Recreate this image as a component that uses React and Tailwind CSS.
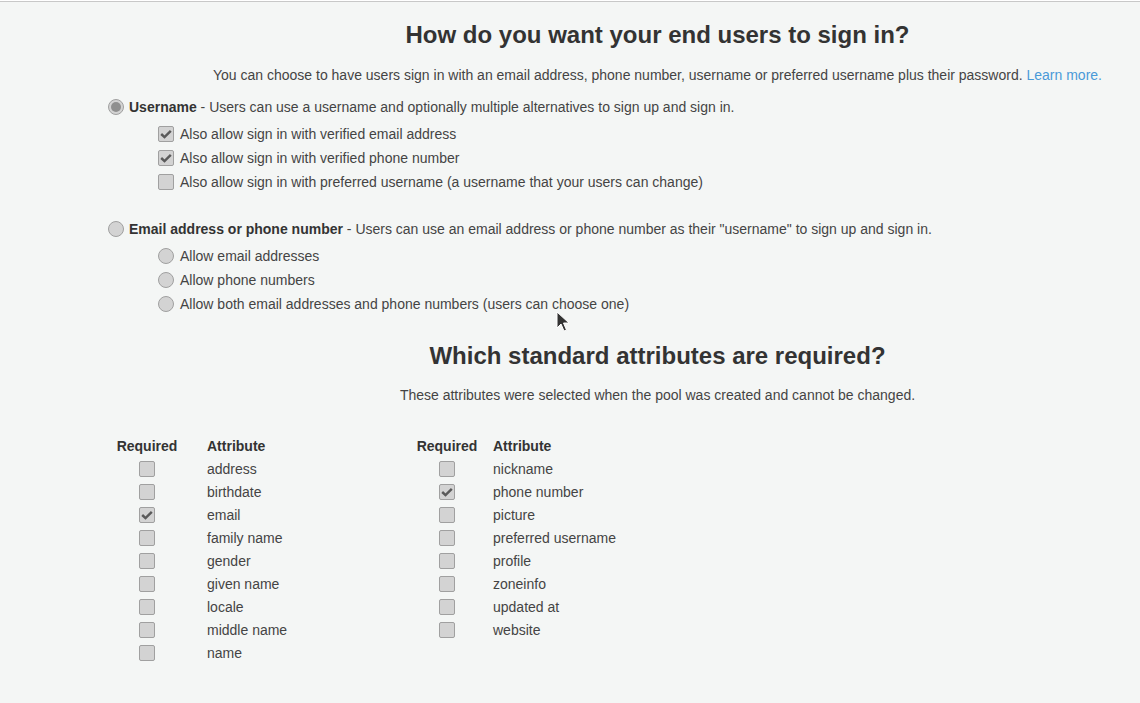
import React from "react";

const font = { fontFamily: '"Liberation Sans", Arial, sans-serif' };

function Check({ checked }) {
  return (
    <span className="inline-flex items-center justify-center w-4 h-4 rounded-[2px] border border-[#a0a0a0] bg-[#d3d3d3] shrink-0">
      {checked && (
        <svg viewBox="0 0 16 16" className="w-[14px] h-[14px]">
          <path d="M2.5 8 L6.3 11.5 L13.5 4.5" fill="none" stroke="#5a5a5a" strokeWidth="2.8" />
        </svg>
      )}
    </span>
  );
}

function Radio({ checked }) {
  return (
    <span className="inline-flex items-center justify-center w-4 h-4 rounded-full border border-[#a0a0a0] bg-[#d3d3d3] shrink-0">
      {checked && <span className="w-[10px] h-[10px] rounded-full bg-[#8f8f8f]" />}
    </span>
  );
}

const left = ["address", "birthdate", "email", "family name", "gender", "given name", "locale", "middle name", "name"];
const right = ["nickname", "phone number", "picture", "preferred username", "profile", "zoneinfo", "updated at", "website"];

function AttrTable({ rows, checked, cols }) {
  return (
    <div className={`grid ${cols} grid-rows-[22px] auto-rows-[23px] items-center text-sm text-[#444]`}>
      <div className="text-center font-bold text-[#333]">Required</div>
      <div className="font-bold text-[#333]">Attribute</div>
      {rows.map(r => (
        <React.Fragment key={r}>
          <div className="flex justify-center"><Check checked={checked.includes(r)} /></div>
          <div>{r}</div>
        </React.Fragment>
      ))}
    </div>
  );
}

export default function App() {
  return (
    <div style={font} className="relative w-[1140px] h-[703px] bg-[#f4f6f5] border-t border-[#c8c8c8] mt-px text-[#444] overflow-hidden">
      <div className="pl-[175px] text-center">
        <h1 className="text-[24px] font-bold text-[#333] mt-[18px] leading-[30px]">How do you want your end users to sign in?</h1>
        <p className="text-sm mt-[15px] leading-5">
          You can choose to have users sign in with an email address, phone number, username or preferred username plus their password.{" "}
          <a className="text-[#4a9ad8]">Learn more.</a>
        </p>
      </div>

      <div className="pl-[108px] mt-[12px] text-sm">
        <label className="flex items-center gap-[5px] h-5">
          <Radio checked /> <span><b className="text-[#333]">Username</b> - Users can use a username and optionally multiple alternatives to sign up and sign in.</span>
        </label>
        <div className="pl-[50px] mt-[7px] flex flex-col gap-1">
          <label className="flex items-center gap-[6px] h-5"><Check checked /> Also allow sign in with verified email address</label>
          <label className="flex items-center gap-[6px] h-5"><Check checked /> Also allow sign in with verified phone number</label>
          <label className="flex items-center gap-[6px] h-5"><Check /> Also allow sign in with preferred username (a username that your users can change)</label>
        </div>

        <label className="flex items-center gap-[5px] h-5 mt-[27px]">
          <Radio /> <span><b className="text-[#333]">Email address or phone number</b> - Users can use an email address or phone number as their "username" to sign up and sign in.</span>
        </label>
        <div className="pl-[50px] mt-[7px] flex flex-col gap-1">
          <label className="flex items-center gap-[6px] h-5"><Radio /> Allow email addresses</label>
          <label className="flex items-center gap-[6px] h-5"><Radio /> Allow phone numbers</label>
          <label className="flex items-center gap-[6px] h-5"><Radio /> Allow both email addresses and phone numbers (users can choose one)</label>
        </div>
      </div>

      <div className="pl-[175px] text-center">
        <h2 className="text-[24px] font-bold text-[#333] mt-[27px] leading-[30px]">Which standard attributes are required?</h2>
        <p className="text-sm mt-[14px] leading-5">These attributes were selected when the pool was created and cannot be changed.</p>
      </div>

      <div className="flex pl-[109px] mt-[30px]">
        <AttrTable rows={left} checked={["email"]} cols="grid-cols-[76px_22px_202px] [&>*:nth-child(even)]:col-start-3" />
        <AttrTable rows={right} checked={["phone number"]} cols="grid-cols-[76px_8px_160px] [&>*:nth-child(even)]:col-start-3" />
      </div>

      <svg className="absolute left-[556px] top-[309px]" width="14" height="22" viewBox="0 0 14 22">
        <path d="M1 1 L1 17 L5 13 L8 20 L10.5 19 L7.5 12 L13 12 Z" fill="#333" stroke="#fff" strokeWidth="1" />
      </svg>
    </div>
  );
}
